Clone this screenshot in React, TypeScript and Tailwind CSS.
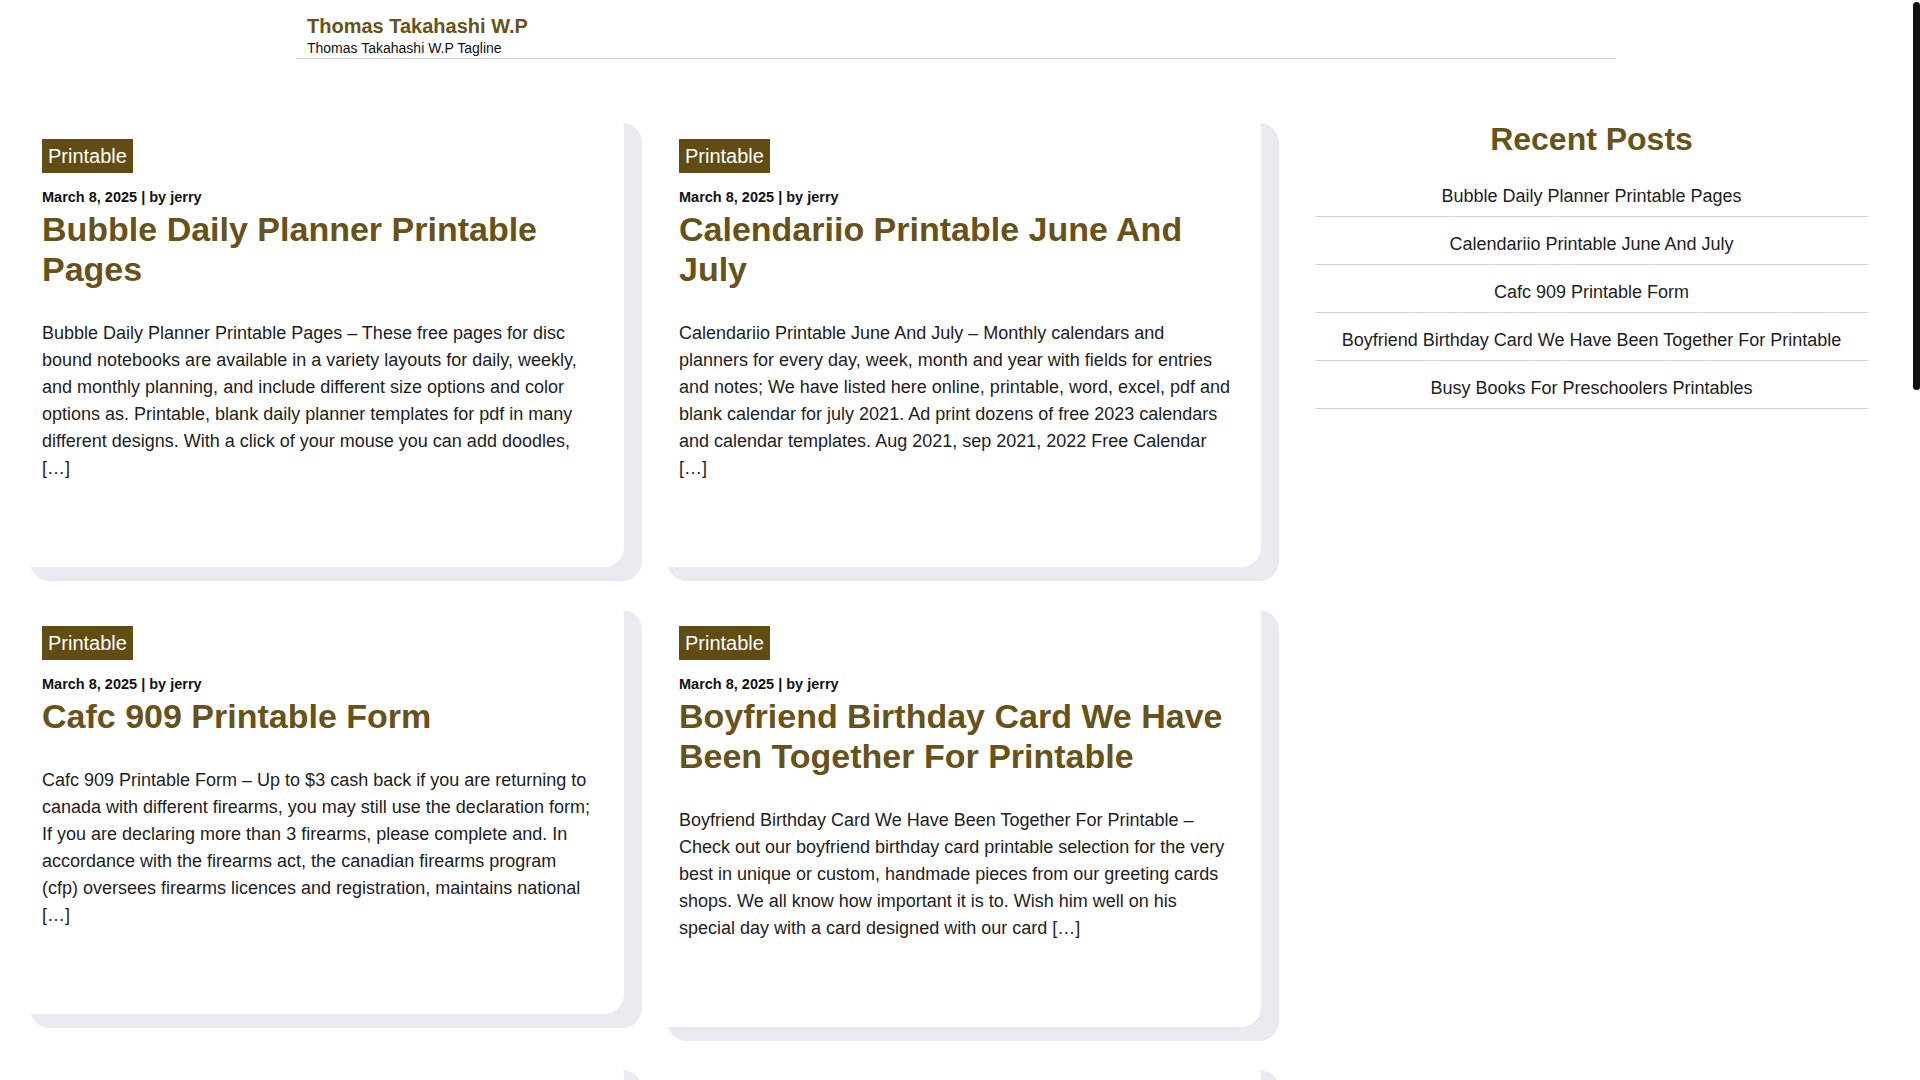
import React from "react";

interface Post {
  title: string;
  excerpt: string;
}

const posts: Post[] = [
  {
    title: "Bubble Daily Planner Printable Pages",
    excerpt:
      "Bubble Daily Planner Printable Pages – These free pages for disc bound notebooks are available in a variety layouts for daily, weekly, and monthly planning, and include different size options and color options as. Printable, blank daily planner templates for pdf in many different designs. With a click of your mouse you can add doodles, […]",
  },
  {
    title: "Calendariio Printable June And July",
    excerpt:
      "Calendariio Printable June And July – Monthly calendars and planners for every day, week, month and year with fields for entries and notes; We have listed here online, printable, word, excel, pdf and blank calendar for july 2021. Ad print dozens of free 2023 calendars and calendar templates. Aug 2021, sep 2021, 2022 Free Calendar […]",
  },
  {
    title: "Cafc 909 Printable Form",
    excerpt:
      "Cafc 909 Printable Form – Up to $3 cash back if you are returning to canada with different firearms, you may still use the declaration form; If you are declaring more than 3 firearms, please complete and. In accordance with the firearms act, the canadian firearms program (cfp) oversees firearms licences and registration, maintains national […]",
  },
  {
    title: "Boyfriend Birthday Card We Have Been Together For Printable",
    excerpt:
      "Boyfriend Birthday Card We Have Been Together For Printable – Check out our boyfriend birthday card printable selection for the very best in unique or custom, handmade pieces from our greeting cards shops. We all know how important it is to. Wish him well on his special day with a card designed with our card […]",
  },
  {
    title: "Busy Books For Preschoolers Printables",
    excerpt:
      "Busy Books For Preschoolers Printables – Keep little hands busy with these free printable quiet book pages for toddlers and preschoolers. Matching, counting, colors and shapes activities that you can print at home, laminate and bind into a simple busy binder for travel, church or a quiet afternoon at home with […]",
  },
  {
    title: "Printable Weekly Meal Planner Template",
    excerpt:
      "Printable Weekly Meal Planner Template – Plan breakfast, lunch and dinner for the whole week with a simple printable meal planner and grocery list. Choose from a variety of colorful designs, print as many copies as you need and stick one on the fridge to keep the whole family on track with […]",
  },
];

const recent = posts.slice(0, 5).map((p) => p.title);

function PostCard({ post }: { post: Post }) {
  return (
    <article className="rounded-[20px] bg-white px-[30px] pt-[30px] pb-[85px] shadow-[18px_14px_0_0_#eaeaf0]">
      <a
        href="#"
        className="inline-block bg-[#614c13] px-[6px] py-[5px] text-[20px] leading-[24px] text-white"
      >
        Printable
      </a>
      <div className="mt-[13px] text-[14.5px] font-bold leading-[22px] text-[#111]">
        March 8, 2025 | by jerry
      </div>
      <h2 className="mt-[1px] text-[34px] font-bold leading-[40px] text-[#67521a]">
        <a href="#">{post.title}</a>
      </h2>
      <p className="mt-[31px] text-[18px] leading-[27px] text-[#1d1d1d]">{post.excerpt}</p>
    </article>
  );
}

export default function App() {
  return (
    <div className="relative h-screen overflow-hidden bg-white pr-[8px] font-['Liberation_Sans',Arial,sans-serif]">
      {/* Header */}
      <header className="mx-auto w-[1320px] border-b border-[#cccccc] pt-[14px] pl-[11px]">
        <a href="#" className="block text-[20px] font-bold leading-[24px] text-[#67521a]">
          Thomas Takahashi W.P
        </a>
        <p className="text-[14px] leading-[20px] text-[#111]">Thomas Takahashi W.P Tagline</p>
      </header>

      <div className="mt-[50px] flex items-start pl-[12px] pb-[60px]">
        {/* Posts */}
        <main className="grid w-[1249px] grid-cols-2 items-start gap-x-[25px] gap-y-[29px]">
          {posts.map((p) => (
            <PostCard key={p.title} post={p} />
          ))}
        </main>

        {/* Sidebar */}
        <aside className="ml-[54px] w-[553px] pt-[11px] text-center">
          <h2 className="text-[32px] font-bold leading-[38px] text-[#67521a]">Recent Posts</h2>
          <ul className="mt-[11px]">
            {recent.map((t) => (
              <li
                key={t}
                className="border-b border-[#d4d4d4] pt-[14px] pb-[6px] text-[18px] leading-[27px] text-[#1d1d1d]"
              >
                <a href="#">{t}</a>
              </li>
            ))}
          </ul>
        </aside>
      </div>

      {/* scrollbar thumb */}
      <div className="absolute top-[2px] right-0 h-[388px] w-[7px] rounded-[4px] bg-[#111]" />
    </div>
  );
}
